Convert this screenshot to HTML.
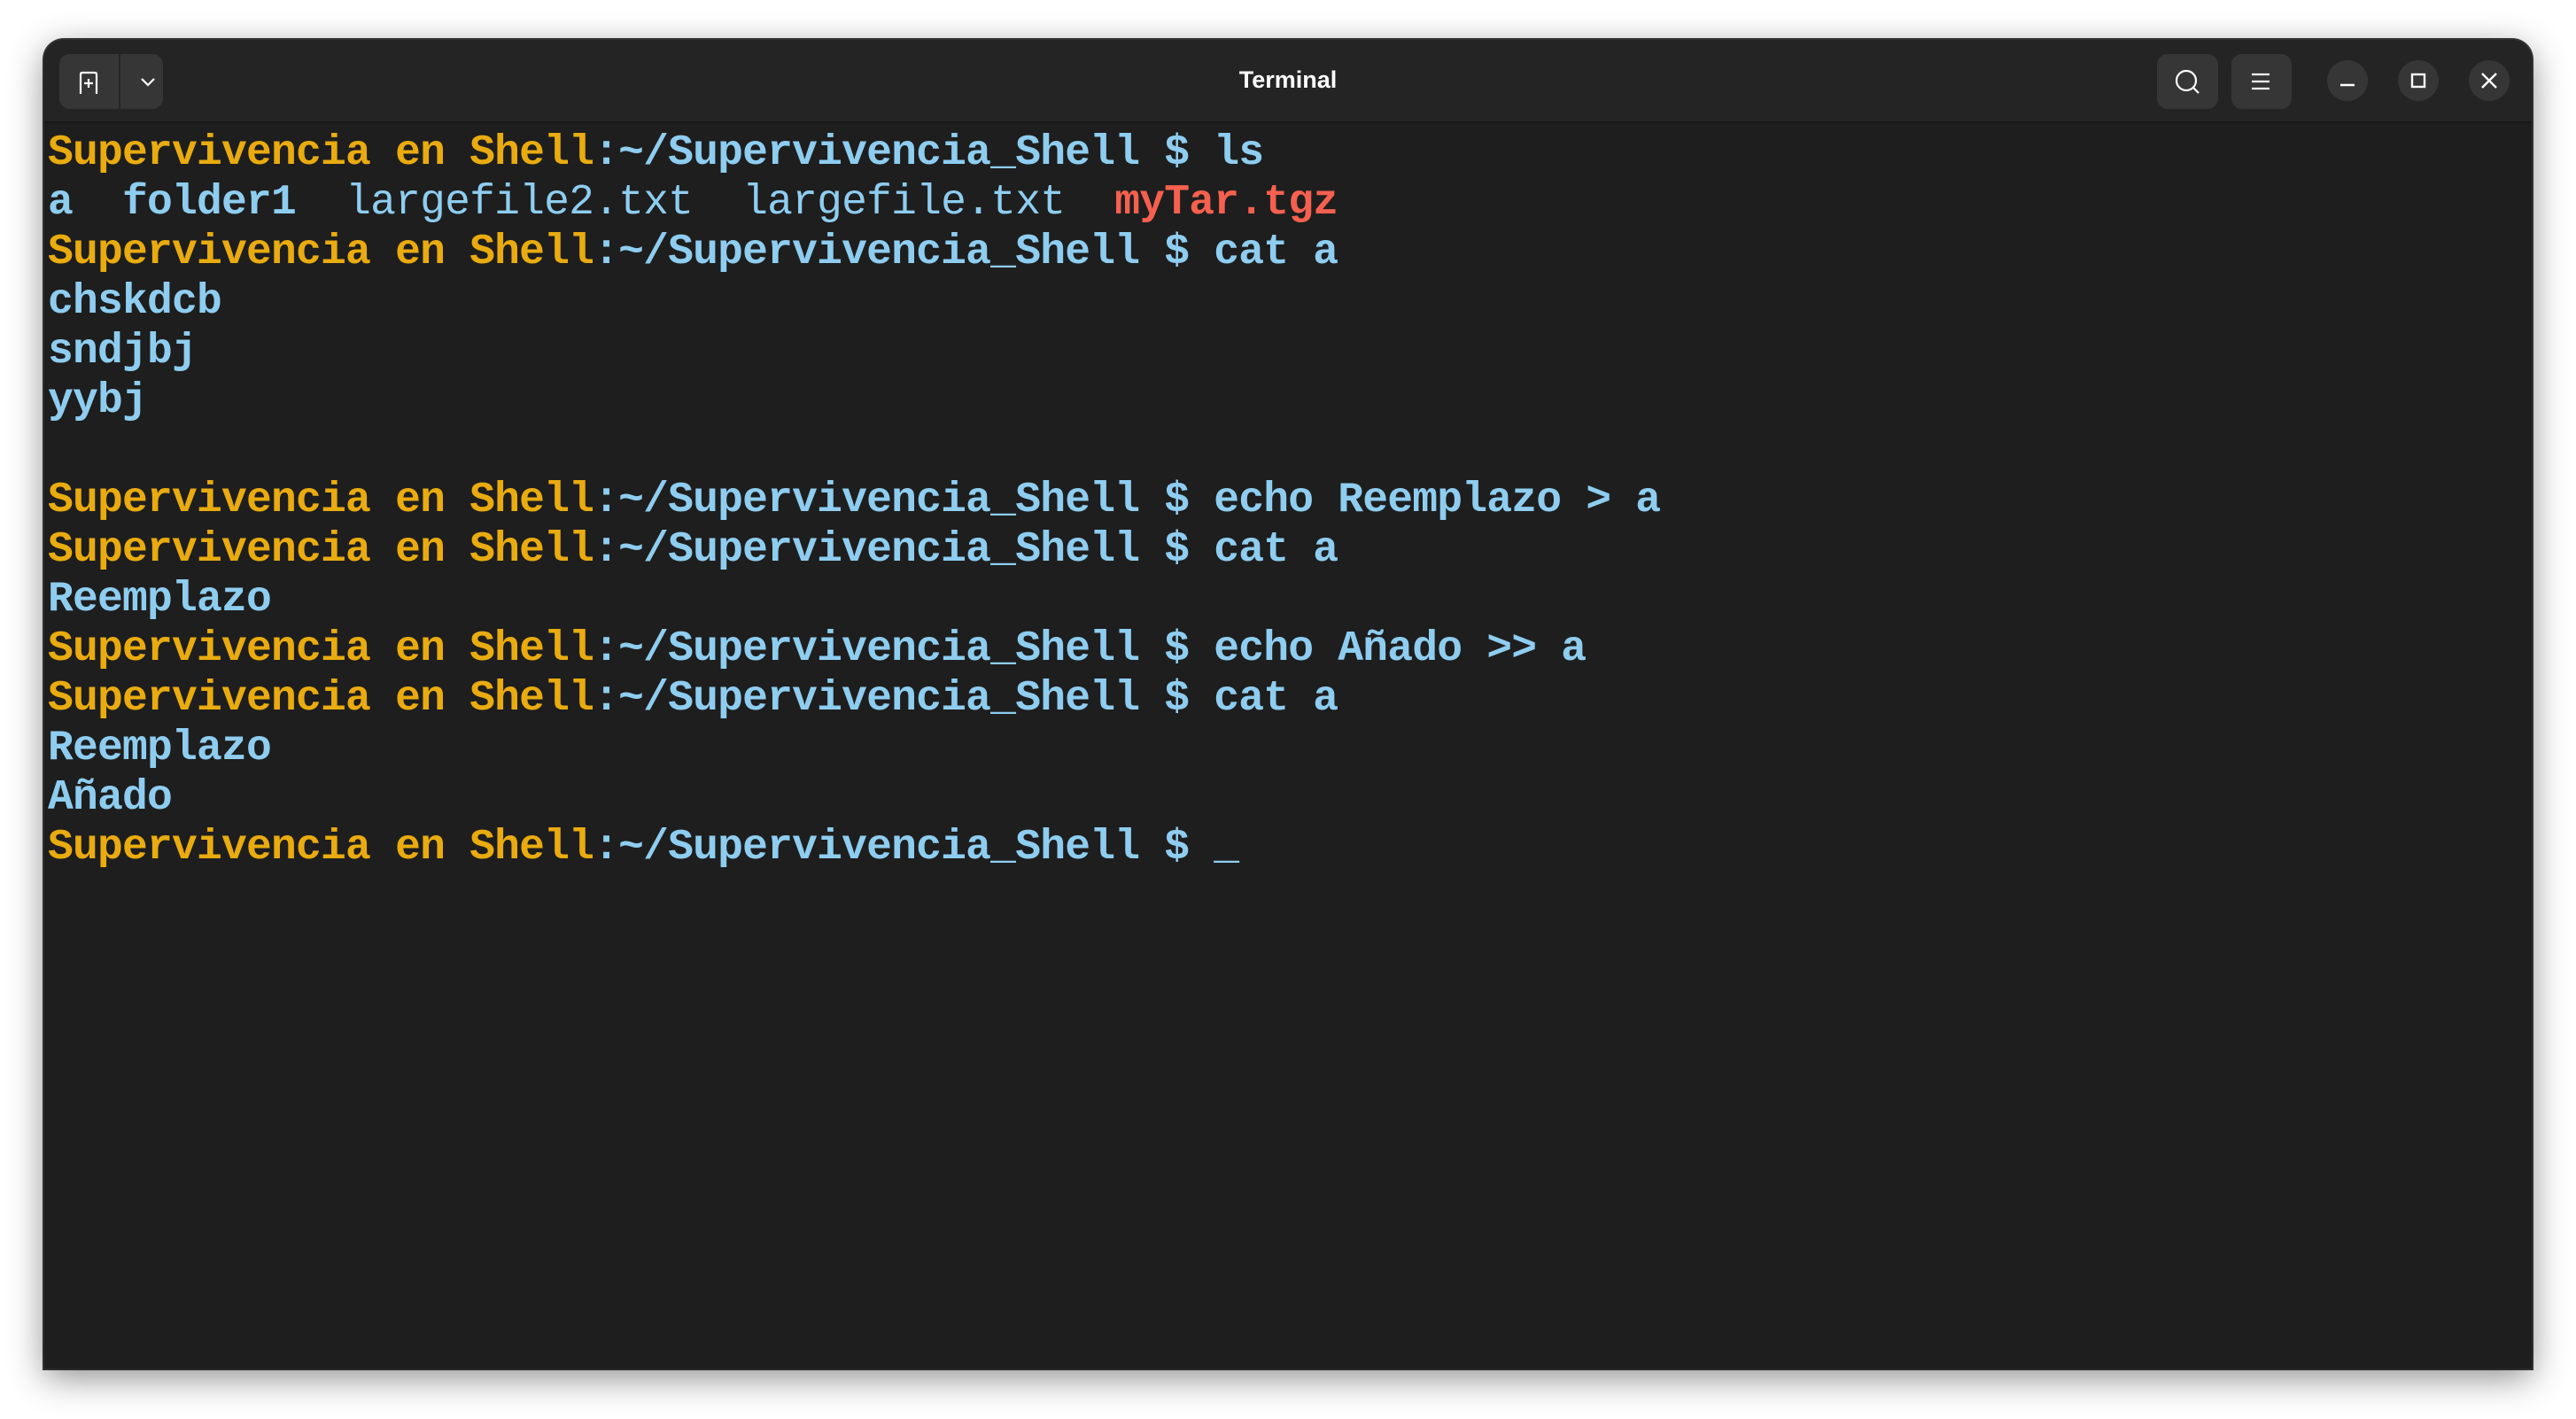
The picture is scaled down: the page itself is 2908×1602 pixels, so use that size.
<!DOCTYPE html>
<html><head><meta charset="utf-8"><style>
html,body{margin:0;padding:0;background:#fff;width:2908px;height:1602px;overflow:hidden}
.win{position:absolute;left:50px;top:45px;width:2808px;height:1500px;background:#1e1e1e;border-radius:22px 22px 0 0;box-shadow:0 10px 40px rgba(0,0,0,.45),0 0 0 2px #3a3a3a;overflow:hidden}
.hd{position:absolute;left:0;top:0;right:0;height:92px;background:#242424;border-bottom:2px solid #181818}
.title{position:absolute;left:0;right:0;top:30px;text-align:center;color:#fff;font:bold 27px "Liberation Sans",sans-serif}
.btn{position:absolute;background:#363636;border-radius:12px;top:16px;height:62px}
.cir{position:absolute;top:23px;width:46px;height:46px;border-radius:50%;background:#363636}
.term{position:absolute;left:4px;top:100px;font-family:"Liberation Mono","DejaVu Sans Mono",monospace;font-size:48px;letter-spacing:-0.8px;line-height:56px;font-weight:bold;white-space:pre;color:#8ecdf0}
.y{color:#e9ab0f}.b{color:#8ecdf0}.r{color:#f5604f}.n{font-weight:normal}
</style></head><body>
<div class="win">
<div class="hd">
 <div class="btn" style="left:17px;width:117px"></div>
 <div style="position:absolute;left:84px;top:16px;width:2px;height:62px;background:#262626"></div>
 <svg style="position:absolute;left:17px;top:16px" width="117" height="62" viewBox="0 0 117 62"><g fill="none" stroke="#fff" stroke-width="2.2"><path d="M24 45V23q0-2 2-2h14q2 0 2 2v22"/><path d="M33 28v10M28 33h10"/><path d="M93 28l7 7 7-7"/></g></svg>
 <div class="title">Terminal</div>
 <div class="btn" style="left:2385px;width:69px"></div>
 <div class="btn" style="left:2469px;width:68px"></div>
 <svg style="position:absolute;left:2385px;top:16px" width="160" height="62"><g fill="none" stroke="#fff" stroke-width="2.2"><circle cx="33" cy="30" r="11"/><path d="M41 38l6 6"/><path d="M107 23h20M107 31h20M107 39h20"/></g></svg>
 <div class="cir" style="left:2577px"></div>
 <div class="cir" style="left:2657px"></div>
 <div class="cir" style="left:2737px"></div>
 <svg style="position:absolute;left:2577px;top:23px" width="210" height="46"><g fill="none" stroke="#fff" stroke-width="2.4"><path d="M15 28h16"/><rect x="96" y="16" width="14" height="14"/><path d="M175 15l16 16M191 15l-16 16"/></g></svg>
</div>
<div class="term"><span class="y">Supervivencia en Shell</span>:~/Supervivencia_Shell $ ls
a  folder1  <span class="n">largefile2.txt  largefile.txt</span>  <span class="r">myTar.tgz</span>
<span class="y">Supervivencia en Shell</span>:~/Supervivencia_Shell $ cat a
chskdcb
sndjbj
yybj

<span class="y">Supervivencia en Shell</span>:~/Supervivencia_Shell $ echo Reemplazo &gt; a
<span class="y">Supervivencia en Shell</span>:~/Supervivencia_Shell $ cat a
Reemplazo
<span class="y">Supervivencia en Shell</span>:~/Supervivencia_Shell $ echo Añado &gt;&gt; a
<span class="y">Supervivencia en Shell</span>:~/Supervivencia_Shell $ cat a
Reemplazo
Añado
<span class="y">Supervivencia en Shell</span>:~/Supervivencia_Shell $ <span class="n">_</span></div>
</div>
</body></html>
